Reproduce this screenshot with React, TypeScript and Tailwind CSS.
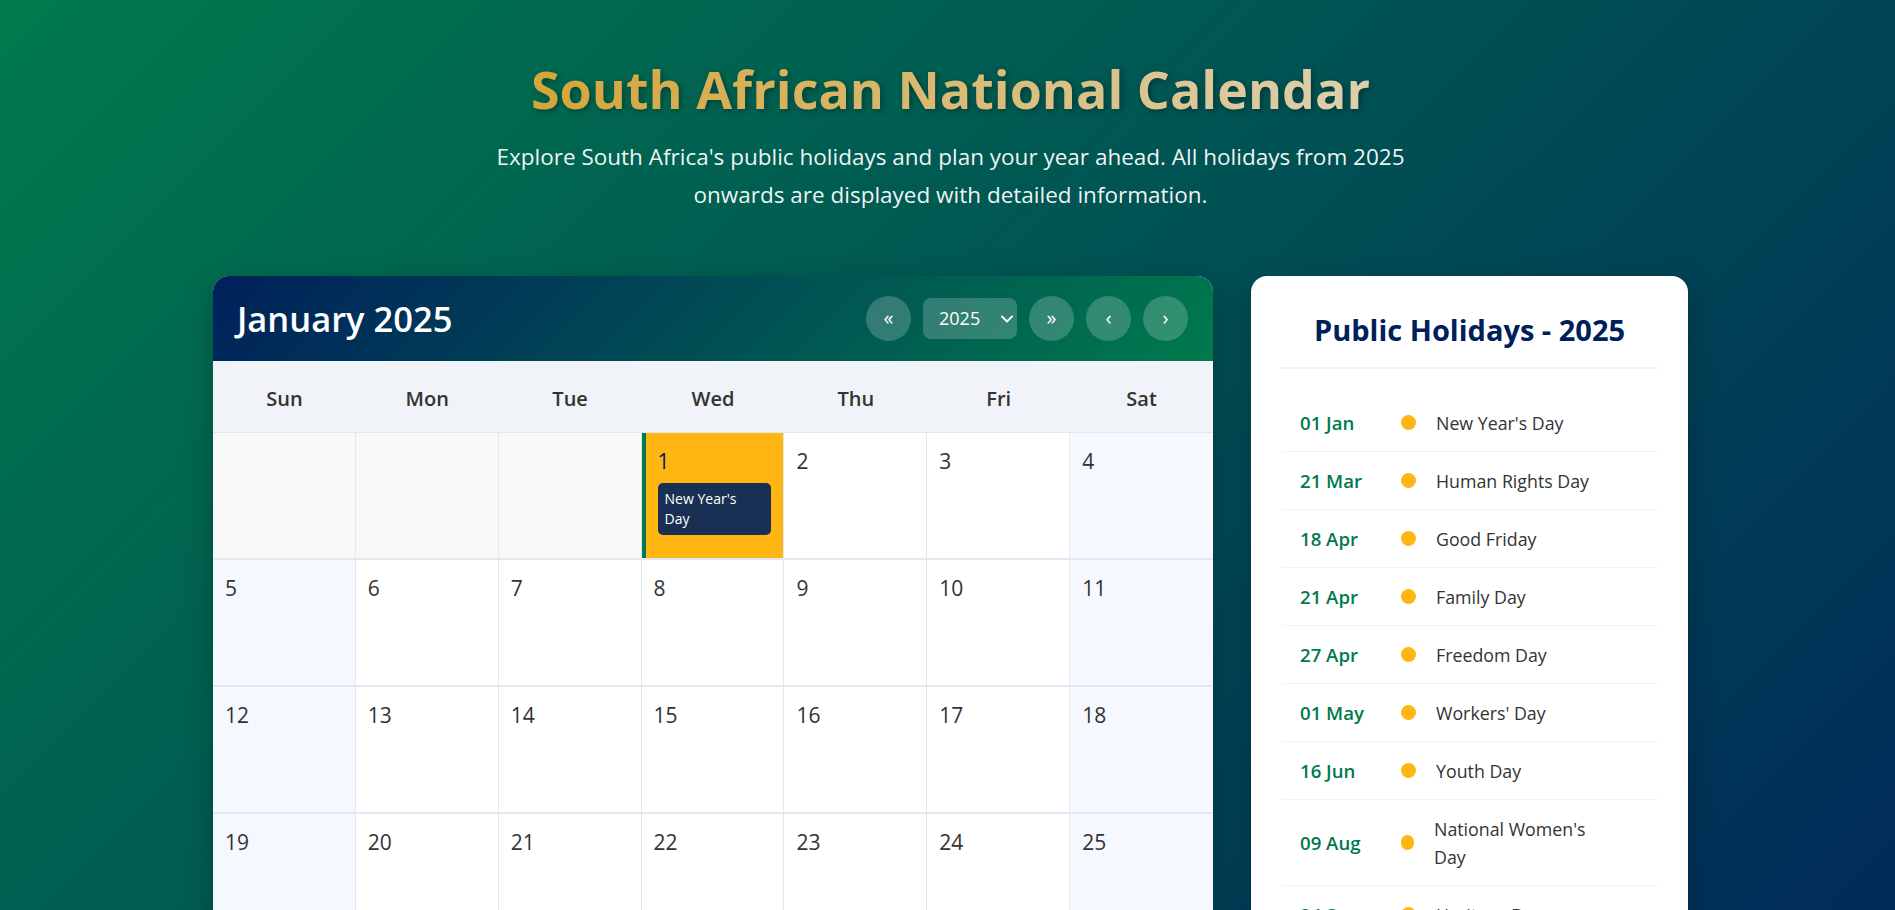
import React from "react";

type Cell = { day: number | null; weekend: boolean; holiday?: string };

const holidays: { date: string; name: string }[] = [
  { date: "01 Jan", name: "New Year's Day" },
  { date: "21 Mar", name: "Human Rights Day" },
  { date: "18 Apr", name: "Good Friday" },
  { date: "21 Apr", name: "Family Day" },
  { date: "27 Apr", name: "Freedom Day" },
  { date: "01 May", name: "Workers' Day" },
  { date: "16 Jun", name: "Youth Day" },
  { date: "09 Aug", name: "National Women's Day" },
  { date: "24 Sept", name: "Heritage Day" },
  { date: "16 Dec", name: "Day of Reconciliation" },
  { date: "25 Dec", name: "Christmas Day" },
  { date: "26 Dec", name: "Day of Goodwill" },
];

function buildWeeks(): Cell[][] {
  const startOffset = 3; // Jan 1 2025 is a Wednesday
  const cells: Cell[] = [];
  for (let i = 0; i < startOffset; i++) cells.push({ day: null, weekend: false });
  for (let d = 1; d <= 31; d++) {
    const col = (startOffset + d - 1) % 7;
    cells.push({
      day: d,
      weekend: col === 0 || col === 6,
      holiday: d === 1 ? "New Year's Day" : undefined,
    });
  }
  while (cells.length % 7 !== 0) cells.push({ day: null, weekend: false });
  const weeks: Cell[][] = [];
  for (let i = 0; i < cells.length; i += 7) weeks.push(cells.slice(i, i + 7));
  return weeks;
}

const dayNames = ["Sun", "Mon", "Tue", "Wed", "Thu", "Fri", "Sat"];

function CircleButton({ label }: { label: string }) {
  return (
    <button className="flex h-[45px] w-[45px] items-center justify-center rounded-full bg-white/20 text-[20px] leading-none text-white">
      <span className="-mt-[2px]">{label}</span>
    </button>
  );
}

function CalendarCard() {
  const weeks = buildWeeks();
  return (
    <section className="w-[1000px] shrink-0 overflow-hidden rounded-2xl bg-white shadow-[0_10px_30px_rgba(0,0,0,0.25)]">
      <div className="flex h-[85px] items-center justify-between bg-[linear-gradient(135deg,#00205b,#007a4d)] pl-6 pr-[25px]">
        <h2 className="text-[34.5px] font-semibold leading-tight text-white">January 2025</h2>
        <div className="flex items-center gap-3">
          <CircleButton label="«" />
          <div className="relative">
            <select
              defaultValue="2025"
              className="h-[41px] w-[94px] appearance-none rounded-lg bg-white/20 pl-[16px] text-[18px] text-white outline-none"
            >
              <option className="text-black" value="2025">2025</option>
              <option className="text-black" value="2026">2026</option>
              <option className="text-black" value="2027">2027</option>
            </select>
            <svg
              className="pointer-events-none absolute right-[4px] top-[17px]"
              width="12"
              height="8"
              viewBox="0 0 12 8"
              fill="none"
            >
              <path d="M1 1.5l5 5 5-5" stroke="white" strokeWidth="1.8" strokeLinecap="round" strokeLinejoin="round" />
            </svg>
          </div>
          <CircleButton label="»" />
          <CircleButton label="‹" />
          <CircleButton label="›" />
        </div>
      </div>
      <div className="grid h-[72px] grid-cols-7 border-b border-[#e2e8f0] bg-[#f0f4f8]">
        {dayNames.map((d) => (
          <div key={d} className="flex items-center justify-center pt-[5px] text-[20px] font-semibold text-[#333]">
            {d}
          </div>
        ))}
      </div>
      {weeks.map((week, wi) => (
        <div key={wi} className="grid h-[127px] grid-cols-7 border-b-2 border-[#e2e8f0]">
          {week.map((c, ci) => {
            const base = "border-r border-[#e2e8f0] px-3 pb-3 pt-[13px] last:border-r-0";
            if (c.day === null) return <div key={ci} className={`${base} bg-[#f9f9f9]`} />;
            if (c.holiday)
              return (
                <div key={ci} className={`${base} border-l-4 border-l-[#007a4d] bg-[#ffb612]`}>
                  <div className="text-[21px] font-medium leading-[1.5] text-[#00205b]">{c.day}</div>
                  <div className="mt-[5px] rounded-[5px] bg-[#00205b]/90 px-[7px] py-1.5 text-[14px] leading-[20px] text-white">
                    {c.holiday}
                  </div>
                </div>
              );
            return (
              <div key={ci} className={`${base} ${c.weekend ? "bg-[#f5f8ff]" : "bg-white"}`}>
                <div className="text-[21px] font-medium leading-[1.5] text-[#333]">{c.day}</div>
              </div>
            );
          })}
        </div>
      ))}
    </section>
  );
}

function HolidayList() {
  return (
    <aside className="w-[437px] shrink-0 rounded-2xl bg-white px-[31px] pb-8 pt-[36.5px] shadow-[0_10px_30px_rgba(0,0,0,0.25)]">
      <h3 className="border-b-2 border-[#eef1f5] pb-[19.5px] text-center text-[29px] font-bold leading-[1.2] text-[#00205b]">
        Public Holidays - 2025
      </h3>
      <ul className="mt-[25px]">
        {holidays.map((h) => (
          <li key={h.date} className="flex items-center border-b border-[#f0f2f5] py-[14.5px] pl-[18px] pr-[60px]">
            <span className="w-[101px] shrink-0 text-[18.6px] font-semibold leading-[28px] text-[#007a4d]">{h.date}</span>
            <span className="h-[15px] w-[15px] rounded-full bg-[#ffb612]" />
            <span className="ml-[20px] text-[17.8px] leading-[28px] text-[#333]">{h.name}</span>
          </li>
        ))}
      </ul>
    </aside>
  );
}

export default function App() {
  return (
    <div className="min-h-[1292px] bg-[linear-gradient(135deg,#007a4d,#00205b)] pl-[6px] font-['Open_Sans',sans-serif]">
      <header className="pt-[58px] text-center">
        <h1 className="inline-block bg-[linear-gradient(90deg,#d6a53a,#ddd0ae)] bg-clip-text text-[52px] font-bold leading-[1.2] text-transparent drop-shadow-[2px_2px_3px_rgba(0,0,0,0.35)]">
          South African National Calendar
        </h1>
        <p className="mx-auto mt-[18px] max-w-[940px] text-[22.5px] leading-[37.5px] text-white/95">
          Explore South Africa's public holidays and plan your year ahead. All holidays from 2025 onwards are displayed with detailed information.
        </p>
      </header>
      <main className="mt-[63px] flex items-start justify-center gap-[38px] pb-16">
        <CalendarCard />
        <HolidayList />
      </main>
    </div>
  );
}
